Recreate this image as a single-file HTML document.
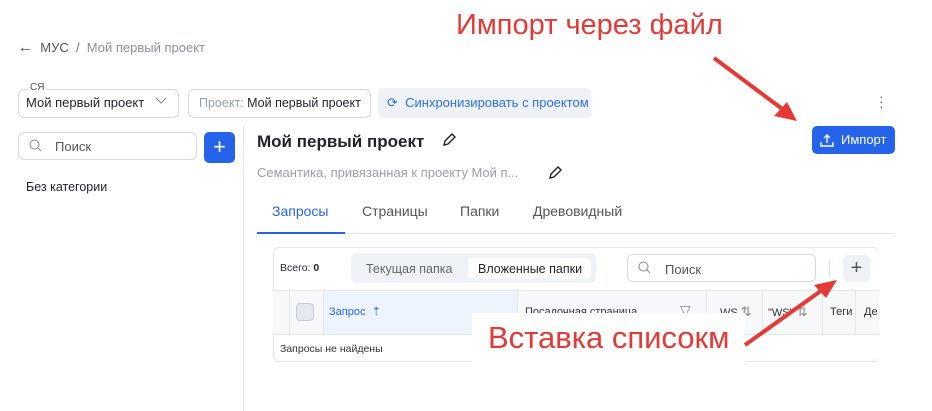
<!DOCTYPE html>
<html><head><meta charset="utf-8"><style>
*{margin:0;padding:0;box-sizing:border-box}
body{width:932px;height:411px;background:#fff;font-family:"Liberation Sans",sans-serif;position:relative;overflow:hidden;color:#1f2329}
.a{position:absolute;white-space:nowrap}
.box{position:absolute;border:1px solid #d5d9e0;border-radius:6px}
</style></head><body>
<div class="a" style="left:18px;top:39px;font-size:13px;color:#6b7280">
<span style="font-size:15px;color:#555">&#8592;</span>&nbsp; <span style="color:#555">МУС</span> &nbsp;/&nbsp; <span style="color:#8a9099">Мой первый проект</span></div>

<div class="a" style="left:456px;top:9px;font-size:29px;color:#e53935">Импорт через файл</div>

<div class="box" style="left:18px;top:89px;width:161px;height:29px"></div>
<div class="a" style="left:28px;top:82px;font-size:10px;color:#555;background:#fff;padding:0 2px">СЯ</div>
<div class="a" style="left:26px;top:95px;font-size:13px">Мой первый проект</div>
<svg class="a" style="left:155px;top:97px" width="12" height="8"><path d="M1 1l5 5 5-5" stroke="#888" fill="none"/></svg>
<div class="box" style="left:188px;top:89px;width:183px;height:29px"></div>
<div class="a" style="left:199px;top:96px;font-size:12.5px"><span style="color:#9aa0a8">Проект:</span> Мой первый проект</div>
<div class="a" style="left:378px;top:88px;width:213px;height:30px;background:#eef2f7;border-radius:5px"></div>
<div class="a" style="left:387px;top:95px;font-size:13px;color:#2f6fdc">&#10227;&nbsp; Синхронизировать с проектом</div>
<div class="a" style="left:879px;top:94px;width:3px;font-size:14px;color:#666;line-height:5px">·<br>·<br>·</div>

<div class="box" style="left:18px;top:132px;width:179px;height:28px"></div>
<svg class="a" style="left:29px;top:139px" width="13" height="13"><circle cx="5.5" cy="5.5" r="4.5" stroke="#888" fill="none"/><path d="M9 9l3 3" stroke="#888"/></svg>
<div class="a" style="left:55px;top:139px;font-size:13px;color:#555">Поиск</div>
<div class="a" style="left:204px;top:132px;width:31px;height:31px;background:#2563eb;border-radius:5px;color:#fff;font-size:22px;text-align:center;line-height:29px">+</div>
<div class="a" style="left:26px;top:180px;font-size:12.5px">Без категории</div>
<div class="a" style="left:243px;top:126px;width:1px;height:285px;background:#e5e7eb"></div>

<div class="a" style="left:257px;top:132px;font-size:17px;font-weight:bold">Мой первый проект</div>
<svg class="a" style="left:442px;top:133px" width="14" height="14"><path d="M2 12l1-4 7-7 3 3-7 7z" stroke="#222" stroke-width="1.4" fill="none"/></svg>
<div class="a" style="left:257px;top:165px;font-size:13px;color:#9aa0a8">Семантика, привязанная к проекту Мой п...</div>
<svg class="a" style="left:548px;top:166px" width="14" height="14"><path d="M2 12l1-4 7-7 3 3-7 7z" stroke="#222" stroke-width="1.4" fill="none"/></svg>

<div class="a" style="left:812px;top:126px;width:83px;height:28px;background:#2563eb;border-radius:5px;color:#fff;font-size:13px;line-height:28px;padding-left:29px">Импорт</div>
<svg class="a" style="left:820px;top:133px" width="14" height="14"><path d="M1 9v4h12V9M7 10V2M4 5l3-3 3 3" stroke="#fff" stroke-width="1.4" fill="none"/></svg>

<div class="a" style="left:257px;top:233px;width:638px;height:1px;background:#e0e5ee"></div>
<div class="a" style="left:257px;top:232px;width:88px;height:2px;background:#2563eb"></div>
<div class="a" style="left:272px;top:203px;font-size:14px;color:#2563eb">Запросы</div>
<div class="a" style="left:362px;top:203px;font-size:14px;color:#555">Страницы</div>
<div class="a" style="left:460px;top:203px;font-size:14px;color:#555">Папки</div>
<div class="a" style="left:533px;top:203px;font-size:14px;color:#555">Древовидный</div>

<div class="a" style="left:273px;top:247px;width:606px;height:115px;border:1px solid #e3e6eb;border-radius:6px;border-right:none"></div>
<div class="a" style="left:280px;top:262px;font-size:10.5px">Всего: <b>0</b></div>
<div class="a" style="left:351px;top:253px;width:245px;height:30px;background:#eef1f5;border-radius:6px"></div>
<div class="a" style="left:468px;top:258px;width:123px;height:21px;background:#fff;border-radius:5px"></div>
<div class="a" style="left:366px;top:262px;font-size:12.5px;color:#666">Текущая папка</div>
<div class="a" style="left:478px;top:262px;font-size:12.5px">Вложенные папки</div>
<div class="box" style="left:627px;top:254px;width:189px;height:28px"></div>
<svg class="a" style="left:638px;top:261px" width="13" height="13"><circle cx="5.5" cy="5.5" r="4.5" stroke="#888" fill="none"/><path d="M9 9l3 3" stroke="#888"/></svg>
<div class="a" style="left:665px;top:262px;font-size:13px;color:#555">Поиск</div>
<div class="a" style="left:829px;top:260px;width:1px;height:16px;background:#ddd"></div>
<div class="a" style="left:843px;top:255px;width:27px;height:27px;background:#eef1f5;border-radius:5px;text-align:center;font-size:20px;line-height:26px;color:#555">+</div>

<div class="a" style="left:273px;top:290px;width:606px;height:45px;background:#f7f8fa;border-top:1px solid #e3e6eb;border-bottom:1px solid #e3e6eb"></div>
<div class="a" style="left:323px;top:291px;width:194px;height:43px;background:#eef4fd"></div>
<div class="a" style="left:289px;top:291px;width:1px;height:43px;background:#e3e6eb"></div>
<div class="a" style="left:323px;top:291px;width:1px;height:43px;background:#e3e6eb"></div>
<div class="a" style="left:517px;top:291px;width:1px;height:43px;background:#e3e6eb"></div>
<div class="a" style="left:706px;top:291px;width:1px;height:43px;background:#e3e6eb"></div>
<div class="a" style="left:762px;top:291px;width:1px;height:43px;background:#e3e6eb"></div>
<div class="a" style="left:822px;top:291px;width:1px;height:43px;background:#e3e6eb"></div>
<div class="a" style="left:855px;top:291px;width:1px;height:43px;background:#e3e6eb"></div>
<div class="a" style="left:296px;top:303px;width:18px;height:18px;background:#e5e8ee;border:1px solid #ccd;border-radius:4px"></div>
<div class="a" style="left:329px;top:305px;font-size:11px;color:#2563eb">Запрос &nbsp;⇡</div>
<div class="a" style="left:525px;top:306px;font-size:11px;color:#333">Посадочная страница</div>
<div class="a" style="left:680px;top:302px;font-size:14px;color:#888">&#9661;</div>
<div class="a" style="left:720px;top:304px;font-size:11px;color:#333">WS <span style="color:#888;font-size:13px">⇅</span></div>
<div class="a" style="left:768px;top:304px;font-size:11px;color:#333">"WS" <span style="color:#888;font-size:13px">⇅</span></div>
<div class="a" style="left:830px;top:306px;font-size:11px;color:#333">Теги</div>
<div class="a" style="left:864px;top:306px;font-size:11px;color:#333">Де</div>
<div class="a" style="left:280px;top:343px;font-size:10.5px;color:#333">Запросы не найдены</div>

<div class="a" style="left:472px;top:313px;width:273px;height:67px;background:#fff"></div>
<div class="a" style="left:488px;top:320px;font-size:31px;color:#e53935">Вставка списокм</div>

<svg class="a" style="left:0;top:0" width="932" height="411">
<path d="M714 58 L785 111" stroke="#e53935" stroke-width="4"/>
<polygon points="797,121 774,116 787,102" fill="#e53935"/>
<path d="M745 345 L825 288" stroke="#e53935" stroke-width="4"/>
<polygon points="837,280 814,285 826,298" fill="#e53935"/>
</svg>
</body></html>
